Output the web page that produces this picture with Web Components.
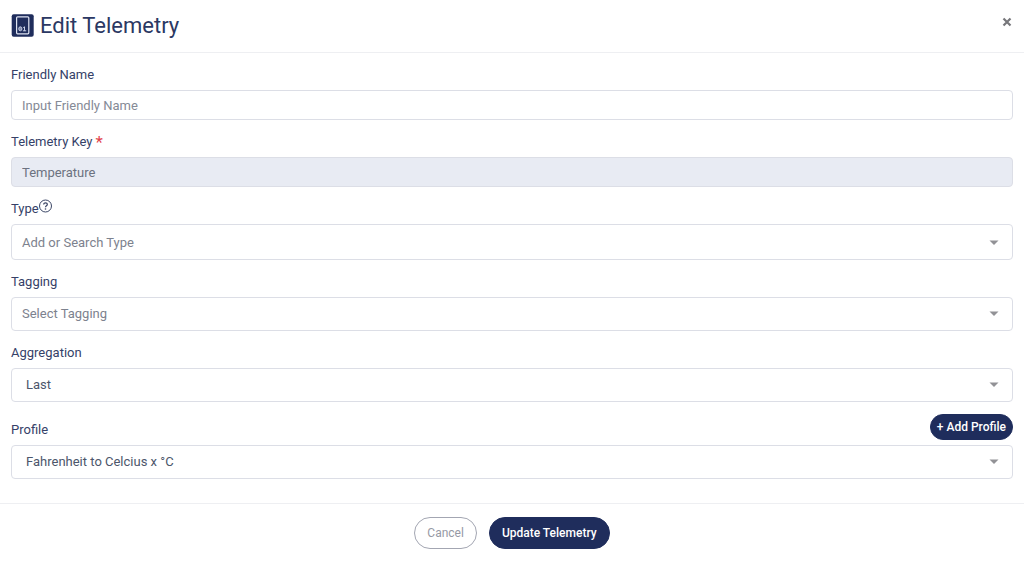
<!DOCTYPE html>
<html lang="en">
<head>
<meta charset="utf-8">
<title>Edit Telemetry</title>
<style>
  body {
    margin: 0;
    background: #fff;
    font-family: Roboto, "Liberation Sans", sans-serif;
    font-size: 13px;
    line-height: 20px;
    color: #354168;
    --navy: #1f2d5c;
    --line: #dcdee6;
    --rule: #eeeff2;
    --hint: #858a96;
  }
</style>
</head>
<body>
<telemetry-dialog></telemetry-dialog>

<template id="dialog-template">
  <style>
    :host { display: block; }
    header {
      display: flex;
      align-items: center;
      gap: 6px;
      height: 52px;
      padding: 0 11px;
      border-bottom: 1px solid var(--rule);
    }
    h1 {
      flex: 1;
      margin: 0;
      font-size: 22px;
      line-height: 28px;
      font-weight: 400;
      color: #2b3863;
    }
    .close {
      align-self: flex-start;
      margin-top: 16px;
      padding: 0;
      border: 0;
      background: none;
      width: 12px;
      height: 12px;
      display: grid;
      place-items: center;
    }
    form { display: flex; flex-direction: column; gap: 12px; padding: 12px 11px 24px; }
    footer {
      display: flex;
      justify-content: center;
      gap: 12px;
      padding: 13px 11px;
      border-top: 1px solid var(--rule);
    }
    svg { display: block; }
  </style>
  <header>
    <svg width="23" height="24" viewBox="0 0 23 24" aria-hidden="true">
      <rect x=".7" y=".2" width="22" height="22.600" rx="2" fill="#1f2d5c"/>
      <rect x="5.600" y="2.800" width="12.200" height="17" rx="1" fill="none" stroke="#dfe4f2" stroke-width="1.200"/>
      <ellipse cx="9.300" cy="14.800" rx="1.600" ry="2" fill="#7d88ad" stroke="#cdd4e8" stroke-width=".9"/>
      <path d="M12.200 13.600l1.300-.8v4M11.900 16.800h3.300" fill="none" stroke="#cdd4e8" stroke-width="1"/>
    </svg>
    <h1>Edit Telemetry</h1>
    <button class="close" type="button" aria-label="Close">
      <svg width="10" height="10" viewBox="0 0 10 10"><path d="M1.500 1.500l7 7M8.500 1.500l-7 7" stroke="#77777b" stroke-width="2.200"/></svg>
    </button>
  </header>
  <form>
    <text-field label="Friendly Name" placeholder="Input Friendly Name"></text-field>
    <text-field label="Telemetry Key" value="Temperature" required disabled></text-field>
    <select-field class="tall" label="Type" option="Add or Search Type" hint>
      <svg slot="mark" width="14" height="14" viewBox="0 0 14 14" role="img" aria-label="Help">
        <circle cx="6.500" cy="7" r="6" fill="none" stroke="#3b4666" stroke-width="1"/>
        <path d="M4.700 5.600c0-2.400 3.700-2.300 3.600-.1 0 1.300-1.800 1.300-1.800 2.700" fill="none" stroke="#3b4666" stroke-width="1.200"/>
        <circle cx="6.500" cy="10" r=".8" fill="#3b4666"/>
      </svg>
    </select-field>
    <select-field label="Tagging" option="Select Tagging" hint></select-field>
    <select-field label="Aggregation" option="Last"></select-field>
    <select-field label="Profile" option="Fahrenheit to Celcius x °C">
      <pill-button slot="action" kind="small">+ Add Profile</pill-button>
    </select-field>
  </form>
  <footer>
    <pill-button kind="outline">Cancel</pill-button>
    <pill-button kind="solid">Update Telemetry</pill-button>
  </footer>
</template>

<template id="text-template">
  <style>
    :host { display: flex; flex-direction: column; gap: 5px; }
    label { display: flex; gap: 3px; }
    .star { color: #e2434b; font-size: 17px; }
    input {
      box-sizing: border-box;
      width: 100%;
      height: 30px;
      margin: 0;
      padding: 0 10px;
      border: 1px solid var(--line);
      border-radius: 4px;
      background: #fff;
      color: #6c7280;
      font: inherit;
    }
    input::placeholder { color: var(--hint); opacity: 1; }
    input:disabled { background: #e8ebf3; }
  </style>
  <label for="control"><span class="name"></span></label>
  <input id="control" type="text">
</template>

<template id="select-template">
  <style>
    :host { display: flex; flex-direction: column; gap: 5px; --height: 34px; --drop: 0px; }
    :host(.tall) { --height: 36px; --drop: 2px; }
    .top { display: flex; justify-content: space-between; align-items: flex-end; }
    .caption { display: flex; height: 20px; }
    .box { display: grid; align-items: center; }
    select {
      grid-area: 1 / 1;
      appearance: none;
      box-sizing: border-box;
      width: 100%;
      height: var(--height);
      margin: 0;
      padding: var(--drop) 32px 0 14px;
      border: 1px solid var(--line);
      border-radius: 4px;
      background: #fff;
      color: #4c566b;
      font: inherit;
    }
    :host([hint]) select { padding-left: 10px; color: #7d828e; }
    .arrow {
      grid-area: 1 / 1;
      justify-self: end;
      padding-top: var(--drop);
      margin-right: 14px;
      pointer-events: none;
    }
  </style>
  <div class="top">
    <div class="caption"><label for="control"></label><slot name="mark"></slot></div>
    <slot name="action"></slot>
  </div>
  <div class="box">
    <select id="control"><option></option></select>
    <svg class="arrow" width="10" height="6" viewBox="0 0 10 6" aria-hidden="true"><path d="M.500 .500h9L5 5z" fill="#929296"/></svg>
  </div>
</template>

<template id="button-template">
  <style>
    :host { display: block; }
    button {
      display: block;
      box-sizing: border-box;
      height: 32px;
      margin: 0;
      padding: 0 12px;
      border: 1px solid var(--navy);
      border-radius: 16px;
      background: var(--navy);
      color: #fff;
      font: inherit;
      font-size: 12px;
      font-weight: 500;
      white-space: nowrap;
    }
    :host([kind="small"]) button { height: 26px; padding: 0 6px; }
    :host([kind="outline"]) button {
      border-color: #a3a6b2;
      background: #fff;
      color: #9699a5;
      font-weight: 400;
    }
  </style>
  <button type="button"><slot></slot></button>
</template>

<script>
  class TemplateElement extends HTMLElement {
    constructor() {
      super();
      const template = document.getElementById(this.constructor.template);
      this.attachShadow({ mode: "open" }).append(template.content.cloneNode(true));
    }
    find(selector) { return this.shadowRoot.querySelector(selector); }
  }

  class PillButton extends TemplateElement {
    static template = "button-template";
  }

  class TextField extends TemplateElement {
    static template = "text-template";
    connectedCallback() {
      const input = this.find("input");
      this.find(".name").textContent = this.getAttribute("label");
      input.placeholder = this.getAttribute("placeholder") || "";
      input.value = this.getAttribute("value") || "";
      input.disabled = this.hasAttribute("disabled");
      input.required = this.hasAttribute("required");
      if (input.required && !this.find(".star")) {
        const star = document.createElement("span");
        star.className = "star";
        star.textContent = "*";
        this.find("label").append(star);
      }
    }
  }

  class SelectField extends TemplateElement {
    static template = "select-template";
    connectedCallback() {
      this.find("label").textContent = this.getAttribute("label");
      this.find("option").textContent = this.getAttribute("option");
    }
  }

  class TelemetryDialog extends TemplateElement {
    static template = "dialog-template";
  }

  customElements.define("pill-button", PillButton);
  customElements.define("text-field", TextField);
  customElements.define("select-field", SelectField);
  customElements.define("telemetry-dialog", TelemetryDialog);
</script>
</body>
</html>
